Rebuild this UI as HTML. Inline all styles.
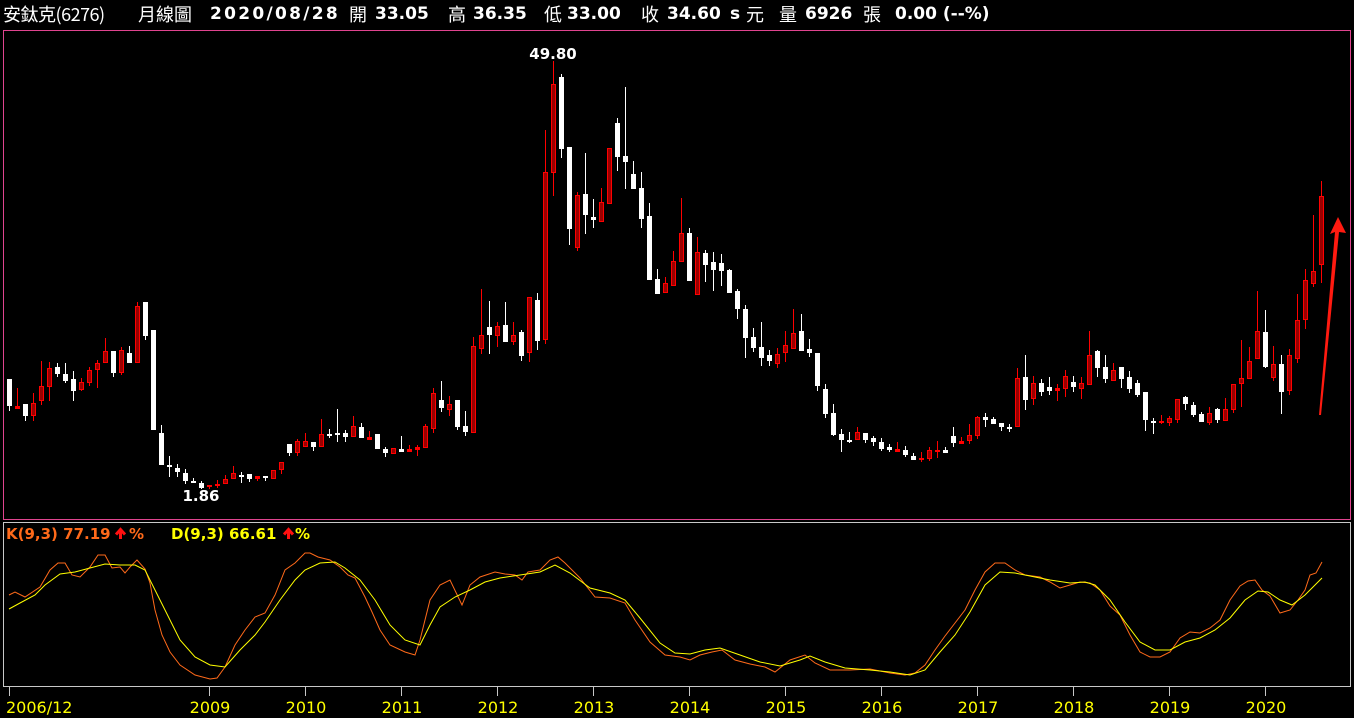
<!DOCTYPE html>
<html><head><meta charset="utf-8"><style>
html,body{margin:0;padding:0;background:#000;width:1354px;height:718px;overflow:hidden}
.h{position:absolute;top:3px;color:#fff;font:bold 17px "DejaVu Sans","Noto Sans CJK TC",sans-serif;white-space:nowrap;line-height:22px}
.c{font-weight:normal;font-family:"Noto Sans CJK TC",sans-serif}
</style></head><body>
<div class="h c" style="left:3px;font-size:18px;letter-spacing:-0.5px">安鈦克(6276)</div>
<div class="h c" style="left:138px;font-size:18px">月線圖</div>
<div class="h" style="left:210px;letter-spacing:2.3px">2020/08/28</div>
<div class="h c" style="left:349px;font-size:18px">開</div>
<div class="h" style="left:375px">33.05</div>
<div class="h c" style="left:448px;font-size:18px">高</div>
<div class="h" style="left:473px">36.35</div>
<div class="h c" style="left:544px;font-size:18px">低</div>
<div class="h" style="left:567px">33.00</div>
<div class="h c" style="left:641px;font-size:18px">收</div>
<div class="h" style="left:667px">34.60</div>
<div class="h" style="left:730px">s</div>
<div class="h c" style="left:746px;font-size:18px">元</div>
<div class="h c" style="left:779px;font-size:18px">量</div>
<div class="h" style="left:805px">6926</div>
<div class="h c" style="left:863px;font-size:18px">張</div>
<div class="h" style="left:895px">0.00 (--%)</div>
<svg id="s" width="1354" height="718" style="position:absolute;left:0;top:0" xmlns="http://www.w3.org/2000/svg">
<rect x="3.5" y="30.5" width="1347" height="489" fill="none" stroke="#e0448f" stroke-width="1"/>
<rect x="3.5" y="522.5" width="1347" height="164" fill="none" stroke="#c8c8c8" stroke-width="1"/>
<g id="cd"></g>
<polygon points="1319,415 1321,415 1339,232 1346,233 1338,217 1330,234 1335,232" fill="#ff1a10"/>
<text x="553" y="59" fill="#fff" font-family="DejaVu Sans" font-weight="bold" font-size="15" text-anchor="middle">49.80</text>
<text x="201" y="501" fill="#fff" font-family="DejaVu Sans" font-weight="bold" font-size="15" text-anchor="middle">1.86</text>
<text x="6" y="539" fill="#ff6a1a" font-family="DejaVu Sans" font-weight="bold" font-size="15">K(9,3) 77.19</text>
<text x="129" y="539" fill="#ff6a1a" font-family="DejaVu Sans" font-weight="bold" font-size="15">%</text>
<text x="171" y="539" fill="#ffff00" font-family="DejaVu Sans" font-weight="bold" font-size="15">D(9,3) 66.61</text>
<text x="295" y="539" fill="#ffff00" font-family="DejaVu Sans" font-weight="bold" font-size="15">%</text>
<path d="M120.5 539V531M116 534.5L120.5 529.5L125 534.5" stroke="#ff1010" stroke-width="3" fill="none"/>
<path d="M288.5 539V531M284 534.5L288.5 529.5L293 534.5" stroke="#ff1010" stroke-width="3" fill="none"/>
<polyline id="k" fill="none" stroke="#ff6a1a" stroke-width="1"/>
<polyline id="d" fill="none" stroke="#ffff00" stroke-width="1"/>
<g id="ax" font-family="DejaVu Sans" font-size="16" fill="#ffff00"></g>
</svg>
<script>
var D="W379,406,379,411 R406,409,388,409 W404,416,404,421 R403,416,393,421 R386,401,361,405 R368,387,362,401 W367,374,363,377 W374,381,363,383 W379,391,371,401 R382,390,378,391 R370,383,367,386 R363,370,360,388 R351,363,338,363 W351,373,351,377 R350,373,347,375 W353,363,346,363 R306,363,302,363 W302,336,302,340 W330,430,330,430 W433,465,425,465 W465,466,456,477 W468,472,464,477 W473,481,469,484 W481,482,478,483 W483,488,481,489 R485,487,485,489 R484,486,480,488 R479,484,475,484 R473,479,466,479 W475,477,472,483 W474,479,474,482 R476,479,476,481 W476,477,476,481 R470,479,470,479 R462,470,462,474 W444,453,444,456 R441,453,439,456 R441,447,433,447 W442,447,442,451 R434,447,419,447 W434,435,429,438 W433,434,409,442 W433,437,430,442 R426,437,416,437 W427,438,423,438 R437,440,431,440 W434,449,434,449 W449,453,447,457 R448,454,448,454 W449,452,436,452 R449,452,445,452 R447,450,445,456 R426,448,424,448 R393,429,388,433 W400,408,381,412 R404,410,396,416 W400,427,400,430 W426,432,411,436 R346,433,337,433 R335,349,289,354 W327,335,301,354 R326,336,322,347 W325,342,302,342 R335,342,322,345 W332,356,330,361 R297,353,297,362 W300,341,293,350 R172,340,130,344 R84,173,61,196 W77,149,74,158 W147,229,147,245 R195,248,192,251 W194,215,153,234 W217,220,199,228 R202,222,188,222 R148,204,148,204 W123,157,118,171 W156,162,87,189 W174,189,161,189 W188,219,172,228 W216,280,203,280 W279,294,269,294 R283,293,277,293 R261,286,251,286 R233,262,198,262 W233,281,228,281 R252,295,237,295 W253,265,250,282 W262,270,252,291 W263,271,254,286 W270,293,269,293 W291,309,289,319 W309,338,305,358 W337,348,328,352 W347,358,322,366 W355,361,350,366 R354,364,348,368 R345,353,331,362 R333,349,309,349 W331,351,314,351 W349,353,339,357 W353,386,353,391 W389,414,384,418 W413,435,404,436 W434,440,429,452 W440,441,432,443 R432,440,427,440 W433,440,433,443 W438,442,436,446 W442,449,438,451 W447,450,444,452 R449,452,442,452 W450,455,446,457 W456,460,453,460 R458,459,452,462 R450,459,447,461 R450,451,441,458 W450,453,447,453 W436,443,427,447 R441,444,437,444 R435,441,424,444 R417,436,416,439 W417,420,413,427 W419,424,417,424 W423,427,423,431 W427,428,424,432 R378,427,368,427 W377,400,355,410 R383,399,376,405 W383,392,379,396 W387,391,377,395 R388,391,384,401 R376,389,370,397 W382,387,376,392 R383,389,377,399 R355,385,331,385 W351,368,350,377 W367,379,355,383 R370,381,363,381 W367,379,367,388 W377,389,371,393 W383,395,380,397 W392,420,392,431 W421,422,418,434 R421,422,415,424 R418,423,416,426 R399,420,399,423 W397,404,396,410 W405,415,402,417 W414,422,412,422 R413,423,407,425 W409,420,408,423 R409,421,398,421 R384,410,384,413 R378,384,340,407 R361,379,347,379 R331,359,291,359 W332,367,310,368 R364,378,346,381 W364,392,355,414 R355,391,349,395 R320,359,294,363 R280,320,269,329 R271,284,215,287 R196,265,181,283".split(" ");
var g="";
D.forEach(function(s,i){var r=s[0]=="R",a=s.slice(1).split(",").map(Number),x=9+8*i;
var col=r?"#ff0000":"#fff";
g+='<rect x="'+x+'" y="'+a[2]+'" width="1" height="'+Math.max(1,a[3]-a[2])+'" fill="'+col+'"/>';
var h=Math.max(2,a[1]-a[0]);
g+='<rect x="'+(x-2)+'" y="'+a[0]+'" width="5" height="'+h+'" fill="'+col+'"/>';
if(r&&h>3)g+='<rect x="'+(x-1)+'" y="'+(a[0]+1)+'" width="3" height="'+(h-2)+'" fill="#9a0000"/>';
});
document.getElementById("cd").innerHTML=g;
document.getElementById("k").setAttribute("points","9,595 15,592 25,597 40,587 50,570 58,563 65,563 72,575 80,577 90,567 98,555 105,555 112,568 120,567 125,573 130,567 137,560 145,569 150,583 155,610 162,635 170,652 180,665 195,675 210,679 217,678 225,667 235,645 245,630 255,617 265,613 275,595 285,570 295,563 305,553 310,553 318,557 330,560 340,567 348,575 355,578 365,597 372,612 380,630 390,645 405,652 415,655 420,640 430,600 440,585 450,580 462,605 470,585 480,577 495,572 505,574 515,575 522,580 528,572 540,570 550,560 558,557 565,563 580,578 595,597 610,598 625,603 635,620 650,642 665,655 680,657 690,660 700,655 712,652 722,650 735,660 750,664 765,667 775,672 790,660 805,655 815,663 830,670 850,670 870,669 890,673 905,675 915,673 925,665 935,650 945,636 955,623 965,610 975,590 985,572 995,563 1005,563 1015,570 1025,575 1040,577 1050,582 1060,588 1070,585 1080,582 1090,583 1100,590 1110,606 1120,615 1130,635 1140,652 1150,657 1160,657 1170,652 1180,638 1190,632 1200,633 1210,628 1220,620 1230,600 1240,586 1248,581 1255,580 1262,590 1270,596 1280,613 1290,610 1298,600 1305,590 1310,575 1316,573 1322,562");
document.getElementById("d").setAttribute("points","9,609 20,603 35,595 45,585 60,574 75,572 90,568 105,564 120,565 135,565 145,570 160,600 170,620 180,640 195,657 210,665 225,667 240,650 255,635 265,622 280,600 295,580 305,570 320,563 335,562 345,568 360,580 375,600 390,625 405,640 420,645 430,625 440,607 455,597 470,590 485,582 500,578 520,575 540,572 555,565 570,573 590,588 610,593 625,600 640,618 660,643 675,653 690,654 705,650 720,648 740,655 760,662 780,666 800,660 810,656 825,662 845,668 870,670 890,672 910,675 925,670 940,652 955,635 970,612 985,585 1000,572 1015,573 1030,576 1050,580 1070,583 1085,582 1095,585 1110,600 1125,622 1140,642 1155,650 1170,650 1185,642 1200,638 1215,630 1230,618 1245,600 1258,591 1268,592 1280,600 1292,605 1305,595 1315,585 1322,578");
var ax='<rect x="9" y="687" width="1" height="9" fill="#c8c8c8"/><text x="6" y="713">2006/12</text>';
for(var y=2009;y<=2020;y++){var x=209+96*(y-2009);ax+='<rect x="'+x+'" y="687" width="1" height="9" fill="#c8c8c8"/><text x="'+(x+1)+'" y="713" text-anchor="middle">'+y+'</text>';}
document.getElementById("ax").innerHTML=ax;
</script>
</body></html>
